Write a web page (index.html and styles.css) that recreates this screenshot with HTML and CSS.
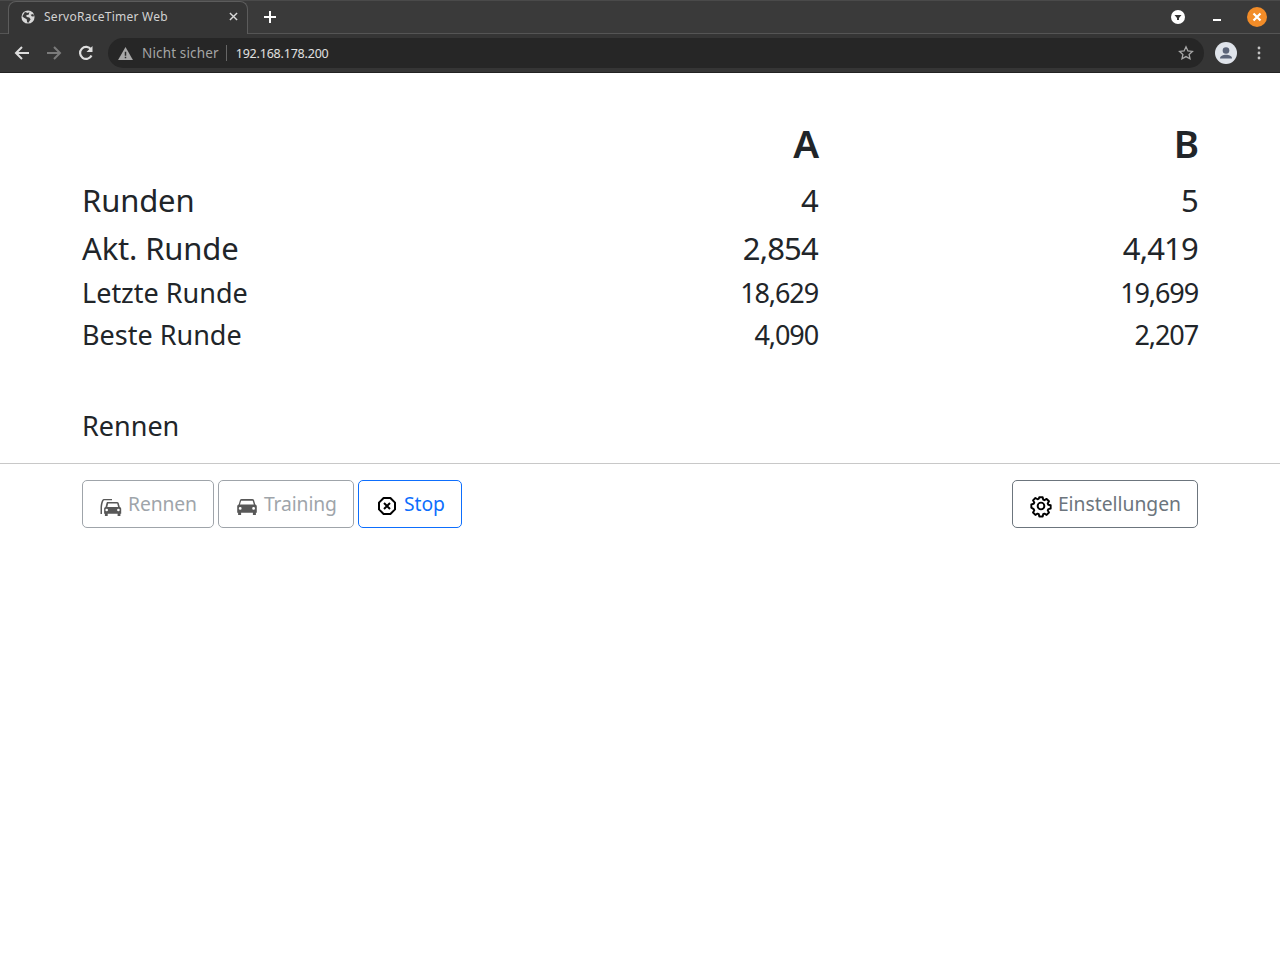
FILE: index.html
```html
<!DOCTYPE html>
<html lang="de">
<head>
<meta charset="utf-8">
<title>ServoRaceTimer Web</title>
<link rel="stylesheet" href="styles.css">
</head>
<body>
<header class="chrome">
  <div class="tabstrip">
    <div class="tab">
      <svg class="favicon" viewBox="0 0 16 16"><circle cx="8" cy="8" r="7.500" fill="#d8d8d8"/><path d="M4.500 2.200L8 3.300 9.500 2l-.5 3-3 1 .5 2 3 .5 1.500 2-2.500 4-1.500-.5-.5-3.500L3 8.500 1.500 7z" fill="#3a3a3a"/><path d="M11 5.500l3-1 1 2.500-2.500.5z" fill="#3a3a3a"/></svg>
      <span class="tab-title">ServoRaceTimer Web</span>
      <svg class="tab-close" viewBox="0 0 10 10"><path d="M1 1l8 8M9 1l-8 8" stroke="#d8d8d8" stroke-width="1.600"/></svg>
    </div>
    <svg class="new-tab" viewBox="0 0 12 12"><path d="M6 0v12M0 6h12" stroke="#fff" stroke-width="2"/></svg>
    <div class="win-controls">
      <svg class="win-menu" viewBox="0 0 14 14"><circle cx="7" cy="7" r="7" fill="#fff"/><path d="M3.500 5h7L8 8v2H6V8z" fill="#333"/></svg>
      <span class="win-min"></span>
      <svg class="win-close" viewBox="0 0 20 20"><circle cx="10" cy="10" r="10" fill="#f28c28"/><path d="M6.500 6.500l7 7M13.500 6.500l-7 7" stroke="#fff" stroke-width="2.200"/></svg>
    </div>
  </div>
  <div class="toolbar">
    <svg class="nav" viewBox="0 0 16 16"><path d="M15 8H2M8 2L2 8l6 6" fill="none" stroke="#dedede" stroke-width="2"/></svg>
    <svg class="nav" viewBox="0 0 16 16"><path d="M1 8h13M8 2l6 6-6 6" fill="none" stroke="#7b7b7b" stroke-width="2"/></svg>
    <svg class="nav" viewBox="0 0 16 16"><path d="M13.500 10.500A6 6 0 1 1 13 4.500" fill="none" stroke="#dedede" stroke-width="2.200"/><path d="M14.500 1v6h-6z" fill="#dedede"/></svg>
    <div class="omnibox">
      <svg class="warn" viewBox="0 0 16 14"><path d="M8 0l8 14H0z" fill="#a8a8a8"/><path d="M7.200 5h1.600v4.500H7.200zM7.200 10.500h1.600v1.600H7.200z" fill="#2a2a2a"/></svg>
      <span class="not-secure">Nicht sicher</span>
      <span class="omni-sep"></span>
      <span class="url">192.168.178.200</span>
      <svg class="star" viewBox="0 0 16 16"><path d="M8 1.800l1.900 4.100 4.500.5-3.300 3 .9 4.400L8 11.600l-4 2.200.9-4.400-3.300-3 4.500-.5z" fill="none" stroke="#a8a8a8" stroke-width="1.300"/></svg>
    </div>
    <svg class="avatar" viewBox="0 0 22 22"><circle cx="11" cy="11" r="11" fill="#dfe3ea"/><circle cx="11" cy="8.500" r="3.300" fill="#5b6478"/><path d="M5 16.500c0-5 12-5 12 0z" fill="#5b6478"/></svg>
    <svg class="dots" viewBox="0 0 4 14"><circle cx="2" cy="2" r="1.400" fill="#c4c4c4"/><circle cx="2" cy="7" r="1.400" fill="#c4c4c4"/><circle cx="2" cy="12" r="1.400" fill="#c4c4c4"/></svg>
  </div>
</header>

<main class="page">
  <div class="container">
    <div class="row row-head"><div class="label"></div><div class="val">A</div><div class="val">B</div></div>
    <div class="row row-big"><div class="label">Runden</div><div class="val">4</div><div class="val">5</div></div>
    <div class="row row-big"><div class="label">Akt. Runde</div><div class="val">2,854</div><div class="val">4,419</div></div>
    <div class="row row-mid"><div class="label">Letzte Runde</div><div class="val">18,629</div><div class="val">19,699</div></div>
    <div class="row row-mid"><div class="label">Beste Runde</div><div class="val">4,090</div><div class="val">2,207</div></div>
    <div class="status">Rennen</div>
  </div>
  <hr class="rule">
  <div class="container actions">
    <button class="btn btn-off" disabled>
      <svg class="icon" viewBox="0 0 24 24"><path d="M1.500 13c.2-3 .7-5 1.500-6.500C3.600 5.400 4.400 5 5.400 5H13v1.300H5.700c-.8 0-1.200.4-1.500 1.200-.5 1.200-.9 3-1.200 5.500v7H1.500z"/><path d="M8.500 8h9.500c.8 0 1.400.4 1.700 1.100l1.100 3.900c.9.300 1.400 1.100 1.400 2v4.800h-.8V22h-2.800v-2.200H8.700V22H5.900v-2.200h-.8V15c0-.9.500-1.700 1.400-2l1-3.900C7.700 8.400 7.900 8 8.500 8zM8.300 13h10.800l-.9-3.500H9.200zM7.700 14.700a1.300 1.300 0 1 0 0 2.600 1.300 1.300 0 0 0 0-2.600zm11.700 0a1.300 1.300 0 1 0 0 2.600 1.300 1.300 0 0 0 0-2.600z" fill-rule="evenodd"/></svg>
      <span>Rennen</span>
    </button>
    <button class="btn btn-off" disabled>
      <svg class="icon" viewBox="0 0 24 24"><path d="M6.500 5h10.800c.8 0 1.400.4 1.700 1.100l1.300 4.400c.9.300 1.500 1.100 1.500 2v6.300h-.9V21h-3v-2.200H6.100V21h-3v-2.200h-.9v-6.300c0-.9.600-1.700 1.500-2l1.300-4.400C5.300 5.400 5.900 5 6.500 5zM5 10.500h13.800l-1.100-3.800H6.100zM5.200 13a1.400 1.400 0 1 0 0 2.800 1.400 1.400 0 0 0 0-2.800zm13.400 0a1.400 1.400 0 1 0 0 2.800 1.400 1.400 0 0 0 0-2.800z" fill-rule="evenodd"/></svg>
      <span>Training</span>
    </button>
    <button class="btn btn-stop">
      <svg class="icon" viewBox="0 0 24 24"><path d="M8.600 4h6.800L20 8.600v6.800L15.400 20H8.600L4 15.400V8.600z" fill="none" stroke="#000" stroke-width="2" stroke-linejoin="round"/><path d="M9 9l6 6M15 9l-6 6" stroke="#000" stroke-width="2"/></svg>
      <span>Stop</span>
    </button>
    <button class="btn btn-settings">
      <svg class="icon" viewBox="0 0 24 24"><g transform="translate(12 12) scale(.84) translate(-12 -12)"><path d="M10 1.500h4l.6 2.900 1.500.7 2.600-1.500 2.800 2.800-1.500 2.600.7 1.500 2.800.6v4l-2.800.6-.7 1.500 1.500 2.600-2.800 2.800-2.600-1.500-1.500.7-.6 2.700h-4l-.6-2.700-1.500-.7-2.600 1.500-2.800-2.800 1.500-2.600-.7-1.500L.5 14v-4l2.800-.6.700-1.500-1.500-2.600 2.800-2.800 2.600 1.500 1.500-.7z" fill="none" stroke="#000" stroke-width="2.300" stroke-linejoin="round"/><circle cx="12" cy="12" r="4" fill="none" stroke="#000" stroke-width="2.300"/></g></svg>
      <span>Einstellungen</span>
    </button>
  </div>
</main>
</body>
</html>
```

FILE: styles.css
```css
* { box-sizing: border-box; }
html, body { margin: 0; padding: 0; background: #fff; }
body { font-family: "Noto Sans", "Open Sans", sans-serif; color: #212529; }

.chrome { height: 73px; background: #353535; display: flex; flex-direction: column; }
.tabstrip { height: 34px; display: flex; align-items: flex-end; padding-left: 8px; background: #3a3a3a; border-top: 1px solid #4a4a4a; border-bottom: 1px solid #555; position: relative; }
.tab { width: 240px; height: 33px; margin-bottom: -1px; background: #353535; border: 1px solid #5c5c5c; border-bottom: 0; border-radius: 8px 8px 0 0; display: flex; align-items: center; padding: 0 9px 3px 12px; }
.favicon { width: 14px; height: 14px; flex: none; }
.tab-title { margin-left: 9px; font-size: 12px; letter-spacing: .26px; color: #d2d2d2; flex: 1; white-space: nowrap; }
.tab-close { width: 9px; height: 9px; flex: none; }
.new-tab { width: 12px; height: 12px; margin: 0 0 10px 16px; flex: none; }
.win-controls { margin-left: auto; display: flex; align-items: center; height: 32px; padding-right: 13px; }
.win-menu { width: 14px; height: 14px; }
.win-min { width: 8px; height: 2px; background: #fff; margin: 5px 0 0 28px; }
.win-close { width: 20px; height: 20px; margin-left: 26px; }

.toolbar { height: 39px; display: flex; align-items: center; padding: 0 14px; background: #353535; border-bottom: 1px solid #222; }
.nav { width: 16px; height: 16px; flex: none; margin-right: 16px; }
.omnibox { width: 1096px; height: 30px; margin-left: -2px; background: #262626; border-radius: 15px; display: flex; align-items: center; padding: 0 10px; }
.warn { width: 15px; height: 13px; flex: none; }
.not-secure { margin-left: 9px; font-size: 13.500px; color: #a5a5a5; letter-spacing: .15px; }
.omni-sep { width: 1px; height: 16px; background: #666; margin: 0 9px 0 7px; }
.url { font-size: 12.500px; letter-spacing: -.2px; color: #e0e0e0; }
.star { width: 16px; height: 16px; margin-left: auto; }
.avatar { width: 22px; height: 22px; margin-left: 11px; flex: none; }
.dots { width: 4px; height: 14px; margin-left: 20px; flex: none; }

.page { padding-top: 46px; }
.container { width: 1140px; margin: 0 auto; padding: 0 12px; }
.row { display: grid; grid-template-columns: 1fr 380px 380px; align-items: center; }
.val { text-align: right; letter-spacing: -.8px; }
.row-head { font-size: 38.500px; font-weight: 600; line-height: 48px; margin-bottom: 9px; }
.row-head .val { letter-spacing: -1px; }
.row-big { font-size: 31px; line-height: 48px; }
.row-big .label { letter-spacing: -.15px; }
.row-mid { font-size: 27px; line-height: 42px; }
.row-mid .val { letter-spacing: -1.1px; }
.status { font-size: 27px; line-height: 42px; margin-top: 49px; }
.rule { margin: 16px 0; border: 0; border-top: 1px solid #c8c8c8; }

.actions { display: flex; gap: 4px; }
.btn { height: 48px; padding: 0 16px 2px; font: inherit; font-size: 19.300px; background: #fff; border: 1px solid; border-radius: 5px; display: flex; align-items: center; gap: 5px; }
.btn-off { color: #6c757d; border-color: #6c757d; opacity: .65; letter-spacing: -.1px; }
.btn-stop { color: #0d6efd; border-color: #0d6efd; }
.btn-settings { color: #6c757d; border-color: #6c757d; margin-left: auto; }
.icon { width: 24px; height: 24px; flex: none; margin-top: 6px; }
```
